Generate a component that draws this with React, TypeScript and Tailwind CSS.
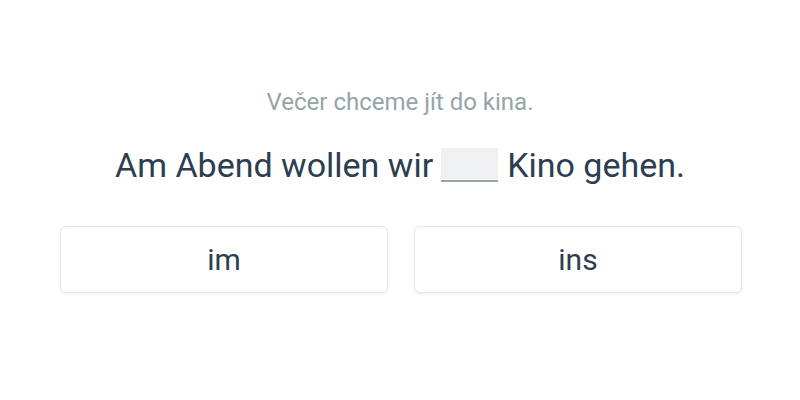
export default function App() {
  return (
    <div className="w-[800px] h-[400px] bg-white flex flex-col items-center pt-[88px]" style={{ fontFamily: 'Roboto, "Liberation Sans", sans-serif' }}>
      <p className="text-[24px] leading-[28px] text-[#95a5a6]">Večer chceme jít do kina.</p>
      <p className="mt-[29px] text-[34px] leading-[40px] text-[#2c3e50] flex items-center">
        <span>Am Abend wollen wir</span>
        <span className="inline-block ml-[8px] mr-[9px] w-[57px] h-[34px] bg-[#eef0f1] border-b-2 border-[#95a5a6] shadow-[inset_0_-1px_0_#ffffff]"></span>
        <span>Kino gehen.</span>
      </p>
      <div className="mt-[41px] pl-[2px] flex gap-[26px]">
        <button className="w-[328px] h-[67px] rounded-[6px] bg-white border border-[#e8e8e8] shadow-[0_1px_3px_rgba(0,0,0,0.08)] text-[30px] text-[#2c3e50]">im</button>
        <button className="w-[328px] h-[67px] rounded-[6px] bg-white border border-[#e8e8e8] shadow-[0_1px_3px_rgba(0,0,0,0.08)] text-[30px] text-[#2c3e50]">ins</button>
      </div>
    </div>
  );
}
